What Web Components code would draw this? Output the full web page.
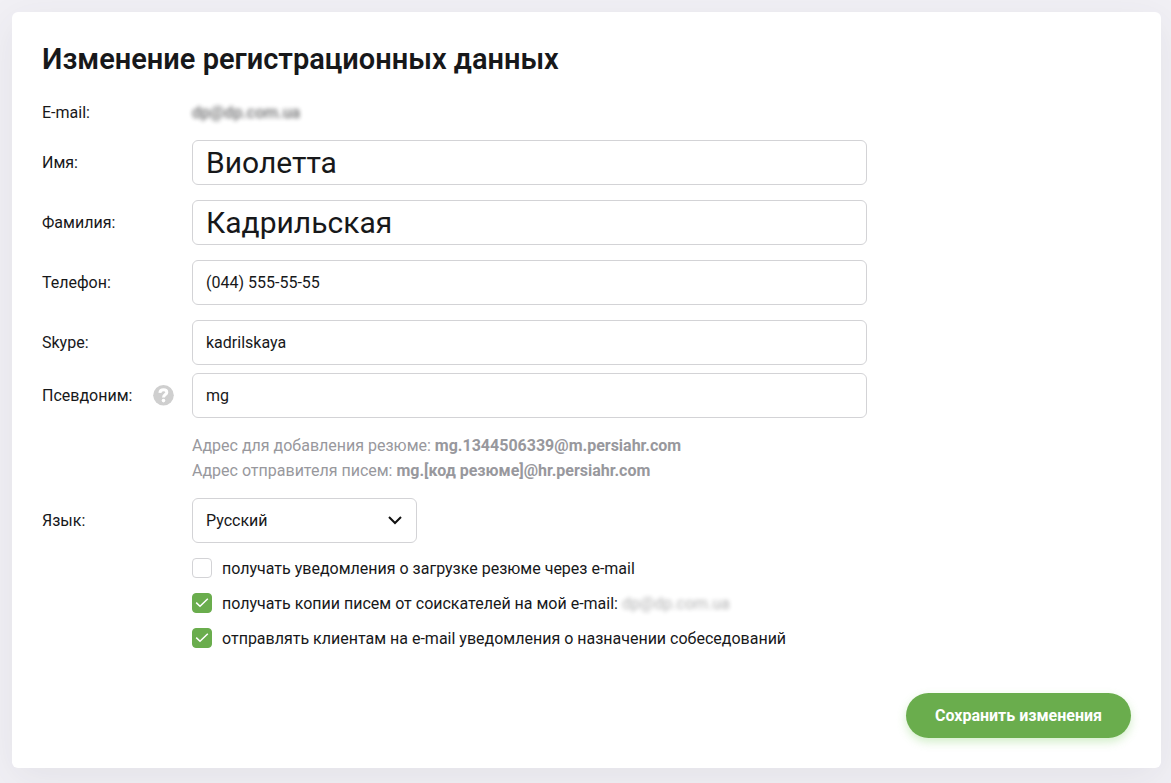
<!DOCTYPE html>
<html lang="ru">
<head>
<meta charset="utf-8">
<meta name="viewport" content="width=device-width, initial-scale=1">
<title>Изменение регистрационных данных</title>
<style>
  html { background: #f1f0f5; }
  body {
    --line: #d3d3d6; --green: #6aad4d;
    margin: 0; padding: 12px 10px 15px 12px;
    font: 16px/25px Roboto, "Liberation Sans", sans-serif; color: #17181a;
  }
</style>
</head>
<body>
<settings-card heading="Изменение регистрационных данных">
  <info-row label="E-mail:"><blurred-text>dp@dp.com.ua</blurred-text></info-row>
  <text-row label="Имя:" value="Виолетта" large></text-row>
  <text-row label="Фамилия:" value="Кадрильская" large></text-row>
  <text-row label="Телефон:" value="(044) 555-55-55" type="tel"></text-row>
  <text-row label="Skype:" value="kadrilskaya"></text-row>
  <text-row label="Псевдоним:" value="mg" tight><help-badge slot="help"></help-badge></text-row>
  <address-hint label="Адрес для добавления резюме:">mg.1344506339@m.persiahr.com</address-hint>
  <address-hint label="Адрес отправителя писем:">mg.[код резюме]@hr.persiahr.com</address-hint>
  <select-row label="Язык:" value="Русский"></select-row>
  <check-row>получать уведомления о загрузке резюме через e-mail</check-row>
  <check-row checked>получать копии писем от соискателей на мой e-mail: <blurred-text faint>dp@dp.com.ua</blurred-text></check-row>
  <check-row checked>отправлять клиентам на e-mail уведомления о назначении собеседований</check-row>
  <save-button slot="actions">Сохранить изменения</save-button>
</settings-card>
<script>
  const rowStyles = `
    :host { display: grid; grid-template-columns: 150px minmax(0, 675px); align-items: center; margin-bottom: 15px; }
    .label { display: flex; align-items: center; justify-content: space-between; padding-right: 18px; }
    input, select {
      box-sizing: border-box; width: 100%; height: 45px; margin: 0; padding: 0 13px;
      border: 1px solid var(--line); border-radius: 6px; background: #fff;
      font: inherit; color: inherit; outline: 0;
    }
    input:focus, select:focus { border-color: var(--green); }
  `;

  class BaseElement extends HTMLElement {
    constructor() {
      super();
      this.attachShadow({ mode: 'open' }).innerHTML = this.render();
    }
    text(name) { return this.getAttribute(name) || ''; }
  }

  customElements.define('settings-card', class extends BaseElement {
    render() {
      return `<style>
        :host { display: block; padding: 30px; border-radius: 6px; background: #fff; box-shadow: 0 10px 40px rgba(60, 60, 80, .08); }
        h1 { margin: 0 0 24px; font-size: 29px; line-height: 34px; font-weight: 600; }
        footer { display: flex; justify-content: flex-end; margin-top: 42px; }
      </style>
      <h1>${this.text('heading')}</h1>
      <form><slot></slot><footer><slot name="actions"></slot></footer></form>`;
    }
  });

  customElements.define('info-row', class extends BaseElement {
    render() {
      return `<style>${rowStyles}</style><span class="label">${this.text('label')}</span><div><slot></slot></div>`;
    }
  });

  customElements.define('text-row', class extends BaseElement {
    render() {
      return `<style>${rowStyles}
        :host([large]) input { font-size: 30px; }
        :host([tight]) { margin-top: -7px; }
      </style>
      <div class="label"><label for="field">${this.text('label')}</label><slot name="help"></slot></div>
      <input id="field" type="${this.text('type') || 'text'}" value="${this.text('value')}">`;
    }
  });

  customElements.define('help-badge', class extends BaseElement {
    render() {
      return `<style>:host { display: block; width: 21px; height: 21px; } svg { display: block; }</style>
      <svg width="21" height="21" viewBox="0 0 21 21" fill="none" aria-hidden="true">
        <circle cx="10.5" cy="10.3" r="10.3" fill="#cfcfcf"/>
        <path d="M6.9 7.8C7.1 5.6 8.6 4.8 10.5 4.8C12.6 4.8 13.8 5.9 13.8 7.4C13.8 9.5 10.5 9.6 10.5 12.4" stroke="#fff" stroke-width="3"/>
        <circle cx="10.5" cy="15.6" r="1.8" fill="#fff"/>
      </svg>`;
    }
  });

  customElements.define('address-hint', class extends BaseElement {
    render() {
      return `<style>
        :host { display: block; padding-left: 150px; color: #98989d; }
        b { font-weight: 700; }
      </style>${this.text('label')} <b><slot></slot></b>`;
    }
  });

  customElements.define('select-row', class extends BaseElement {
    render() {
      return `<style>${rowStyles}
        :host { margin-top: 15px; margin-bottom: 13px; }
        .box { display: grid; width: 225px; align-items: center; }
        select, svg { grid-area: 1 / 1; }
        select { appearance: none; }
        svg { justify-self: end; margin-right: 14px; pointer-events: none; }
      </style>
      <label class="label" for="field">${this.text('label')}</label>
      <div class="box">
        <select id="field"><option>${this.text('value')}</option></select>
        <svg width="16" height="10" viewBox="0 0 16 10" fill="none" aria-hidden="true"><path d="M2 1L8 7L14 1" stroke="#111" stroke-width="2"/></svg>
      </div>`;
    }
  });

  customElements.define('check-row', class extends BaseElement {
    render() {
      return `<style>
        :host { display: block; padding-left: 150px; margin-bottom: 10px; }
        label { display: flex; align-items: flex-start; gap: 10px; }
        .box { display: grid; place-items: center; width: 20px; height: 20px; margin-top: 2px; flex: none; }
        input, svg { grid-area: 1 / 1; }
        input { appearance: none; box-sizing: border-box; width: 20px; height: 20px; margin: 0; border: 1px solid var(--line); border-radius: 4px; background: #fff; }
        input:checked { border-color: var(--green); background: var(--green); }
        svg { display: none; pointer-events: none; z-index: 1; }
        input:checked + svg { display: block; }
      </style>
      <label>
        <span class="box"><input type="checkbox"${this.hasAttribute('checked') ? ' checked' : ''}>
        <svg width="14" height="10" viewBox="0 0 14 10" fill="none" aria-hidden="true"><path d="M1.2 4.6L5 8.2L12.8 .8" stroke="#fff" stroke-width="1.5"/></svg></span>
        <span><slot></slot></span>
      </label>`;
    }
  });

  customElements.define('blurred-text', class extends BaseElement {
    render() {
      return `<style>
        :host { display: inline-block; filter: blur(2px); opacity: .65; font-weight: 500; }
        :host([faint]) { opacity: .35; font-weight: 400; }
      </style><slot></slot>`;
    }
  });

  customElements.define('save-button', class extends BaseElement {
    render() {
      return `<style>
        :host { display: block; }
        button { min-width: 225px; height: 45px; padding: 0 28px; border: 0; border-radius: 23px; background: var(--green); color: #fff; font: inherit; font-weight: 700; box-shadow: 0 4px 10px rgba(106, 200, 77, .3); cursor: pointer; }
      </style><button type="button"><slot></slot></button>`;
    }
  });
</script>
</body>
</html>
